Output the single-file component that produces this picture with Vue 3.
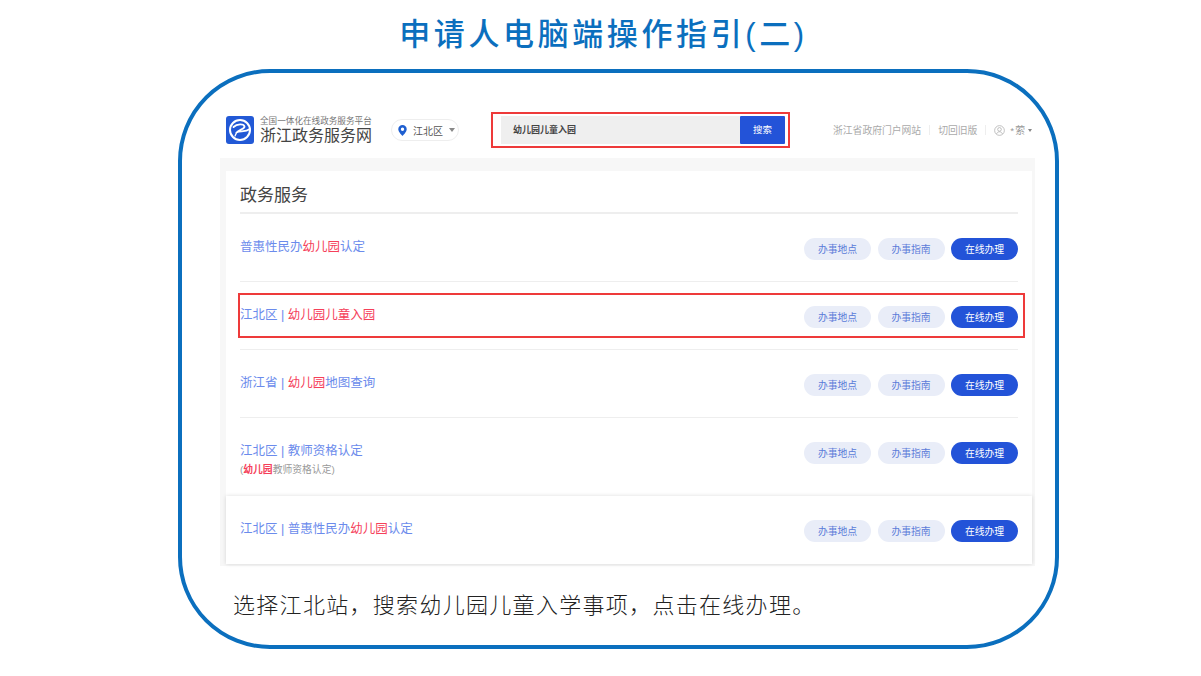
<script setup>
const rows = [
  { parts: [['普惠性民办', 0], ['幼儿园', 1], ['认定', 0]] },
  { parts: [['江北区 | ', 0], ['幼儿园儿童入园', 1]], marked: true },
  { parts: [['浙江省 | ', 0], ['幼儿园', 1], ['地图查询', 0]] },
  { parts: [['江北区 | 教师资格认定', 0]], tall: true },
  { parts: [['江北区 | 普惠性民办', 0], ['幼儿园', 1], ['认定', 0]], last: true }
]
</script>

<template>
  <div class="page">
    <h1 class="title">申请人电脑端操作指引(二)</h1>
    <div class="frame">
      <div class="topbar">
        <svg class="logo" viewBox="0 0 28 28">
          <rect width="28" height="28" rx="3" fill="#2259d6" />
          <circle cx="14" cy="14" r="10" fill="none" stroke="#fff" stroke-width="2" />
          <path d="M7.500 11C11 7.500 18 7.500 18.500 10.500 18.800 13 13 13.500 10.500 16.500 14 14.500 19 16.500 24 13" fill="none" stroke="#fff" stroke-width="1.800" stroke-linecap="round" stroke-linejoin="round" />
          <path d="M10.500 16.500C10 18 9.500 19 9 20" fill="none" stroke="#fff" stroke-width="1.200" stroke-linecap="round" />
        </svg>
        <div class="brand">
          <div class="brand-sub">全国一体化在线政务服务平台</div>
          <div class="brand-name">浙江政务服务网</div>
        </div>
        <div class="city">
          <svg class="pin" viewBox="0 0 10 13">
            <path d="M5 0a5 5 0 0 0-5 5c0 3.300 5 8 5 8s5-4.700 5-8a5 5 0 0 0-5-5zm0 7a2 2 0 1 1 0-4 2 2 0 0 1 0 4z" fill="#1f5fd0" />
          </svg>
          <span>江北区</span>
          <i class="caret"></i>
        </div>
        <div class="search">
          <div class="search-input">幼儿园儿童入园</div>
          <div class="search-btn">搜索</div>
        </div>
        <div class="links">
          <span>浙江省政府门户网站</span>
          <i class="sep"></i>
          <span>切回旧版</span>
          <i class="sep"></i>
          <svg class="user" viewBox="0 0 12 12">
            <circle cx="6" cy="6" r="5.300" fill="none" stroke="#aaa" stroke-width=".8" />
            <circle cx="6" cy="4.800" r="2" fill="none" stroke="#aaa" stroke-width=".8" />
            <path d="M2.800 9.600c.8-1.500 1.900-2.200 3.200-2.200s2.400.7 3.200 2.200" fill="none" stroke="#aaa" stroke-width=".8" />
          </svg>
          <span class="user-name">*萦</span>
          <i class="caret small"></i>
        </div>
      </div>

      <div class="panel">
        <div class="card">
          <h2 class="card-title">政务服务</h2>
          <div
            v-for="(row, i) in rows"
            :key="i"
            class="row"
            :class="{ tall: row.tall, last: row.last }"
          >
            <div class="row-text">
              <div class="row-name">
                <span v-for="(p, j) in row.parts" :key="j" :class="{ hit: p[1] }">{{ p[0] }}</span>
              </div>
              <div v-if="row.tall" class="row-note">(<span class="hit strong">幼儿园</span>教师资格认定)</div>
            </div>
            <div class="row-btns">
              <span class="btn">办事地点</span>
              <span class="btn">办事指南</span>
              <span class="btn primary">在线办理</span>
            </div>
            <div v-if="row.marked" class="mark"></div>
          </div>
        </div>
      </div>

      <p class="caption">选择江北站，搜索幼儿园儿童入学事项，点击在线办理。</p>
    </div>
  </div>
</template>

<style>
body {
  background: #fff;
}
</style>

<style scoped>
.page {
  width: 1201px;
  height: 676px;
  overflow: hidden;
  background: #fff;
  font-family: "Liberation Sans", "Noto Sans CJK SC", sans-serif;
}

.title {
  margin: 0;
  height: 69px;
  padding-left: 6px;
  box-sizing: border-box;
  text-align: center;
  font-size: 31px;
  line-height: 70px;
  font-weight: 500;
  letter-spacing: 3.600px;
  color: #0b6fbe;
}

.frame {
  width: 881px;
  height: 580px;
  margin-left: 178px;
  box-sizing: border-box;
  border: 4px solid #0b6fbe;
  border-radius: 92px;
  padding: 39px 0 0 38px;
}

.topbar {
  display: flex;
  align-items: center;
  width: 812px;
  height: 36px;
  padding-left: 6px;
  box-sizing: border-box;
}

.logo {
  width: 28px;
  height: 28px;
  flex: none;
}

.brand {
  margin-left: 6px;
  width: 131px;
  color: #555;
}

.brand-sub {
  font-size: 8.600px;
  line-height: 11px;
  color: #777;
}

.brand-name {
  font-size: 16px;
  line-height: 18px;
  color: #444;
}

.city {
  display: flex;
  align-items: center;
  width: 68px;
  height: 22px;
  box-sizing: border-box;
  border: 1px solid #eee;
  border-radius: 11px;
  padding-left: 6px;
  font-size: 10px;
  color: #555;
}

.pin {
  width: 9px;
  height: 11px;
  margin-right: 6px;
}

.caret {
  width: 0;
  height: 0;
  margin-left: 6px;
  border-left: 3px solid transparent;
  border-right: 3px solid transparent;
  border-top: 4px solid #888;
}

.caret.small {
  margin-left: 2px;
  border-left-width: 2.500px;
  border-right-width: 2.500px;
  border-top-width: 3px;
}

.search {
  display: flex;
  width: 299px;
  height: 36px;
  margin-left: 32px;
  box-sizing: border-box;
  border: 2px solid #ee3a3a;
  padding: 2px 3px 2px 8px;
}

.search-input {
  flex: 1;
  background: #efefef;
  padding-left: 12px;
  font-size: 9px;
  font-weight: 700;
  line-height: 28px;
  color: #444;
}

.search-btn {
  width: 45px;
  background: #2353d8;
  border-radius: 1px;
  text-align: center;
  font-size: 9.500px;
  line-height: 28px;
  color: #fff;
}

.links {
  display: flex;
  align-items: center;
  margin-left: 43px;
  font-size: 9.800px;
  color: #aaa;
  white-space: nowrap;
}

.sep {
  width: 1px;
  height: 10px;
  margin: 0 8px;
  background: #eee;
}

.user {
  width: 11px;
  height: 11px;
  margin-right: 5px;
}

.user-name {
  color: #999;
  letter-spacing: 1px;
}

.panel {
  width: 815px;
  height: 408px;
  margin-top: 10px;
  box-sizing: border-box;
  padding: 13px 3px 0 6px;
  background: #f7f7f7;
}

.card {
  height: 393px;
  box-sizing: border-box;
  padding: 0 14px;
  background: #fff;
}

.card-title {
  margin: 0;
  height: 43px;
  border-bottom: 2px solid #eee;
  box-sizing: border-box;
  font-size: 17px;
  font-weight: 400;
  line-height: 50px;
  color: #444;
}

.row {
  position: relative;
  display: flex;
  justify-content: space-between;
  align-items: flex-start;
  height: 68px;
  box-sizing: border-box;
  border-bottom: 1px solid #eee;
}

.row.tall {
  height: 78px;
  border-bottom: 0;
}

.row.last {
  height: 68px;
  margin: 0 -14px;
  padding: 0 14px;
  border-bottom: 0;
  box-shadow: 0 0 4px rgba(0, 0, 0, 0.14);
}

.row-text {
  padding-top: 23px;
}

.row-name {
  font-size: 12.500px;
  line-height: 20px;
  color: #6b8bec;
}

.row-note {
  margin-top: 2px;
  font-size: 9.800px;
  line-height: 14px;
  color: #999;
}

.hit {
  color: #f5405a;
}

.strong {
  font-weight: 700;
}

.row-btns {
  display: flex;
  gap: 6.500px;
  padding-top: 24px;
}

.btn {
  width: 67px;
  height: 22px;
  border-radius: 11px;
  background: #e9edf8;
  text-align: center;
  font-size: 9.800px;
  line-height: 24px;
  color: #5b7bd8;
}

.btn.primary {
  background: #2353d8;
  color: #fff;
}

.mark {
  position: absolute;
  left: -2px;
  right: -7px;
  top: 11px;
  height: 45px;
  box-sizing: border-box;
  border: 2px solid #ee3a3a;
  pointer-events: none;
}

.caption {
  margin: 24px 0 0 13px;
  font-size: 22px;
  line-height: 32px;
  letter-spacing: 1.300px;
  font-weight: 300;
  color: #222;
}
</style>
